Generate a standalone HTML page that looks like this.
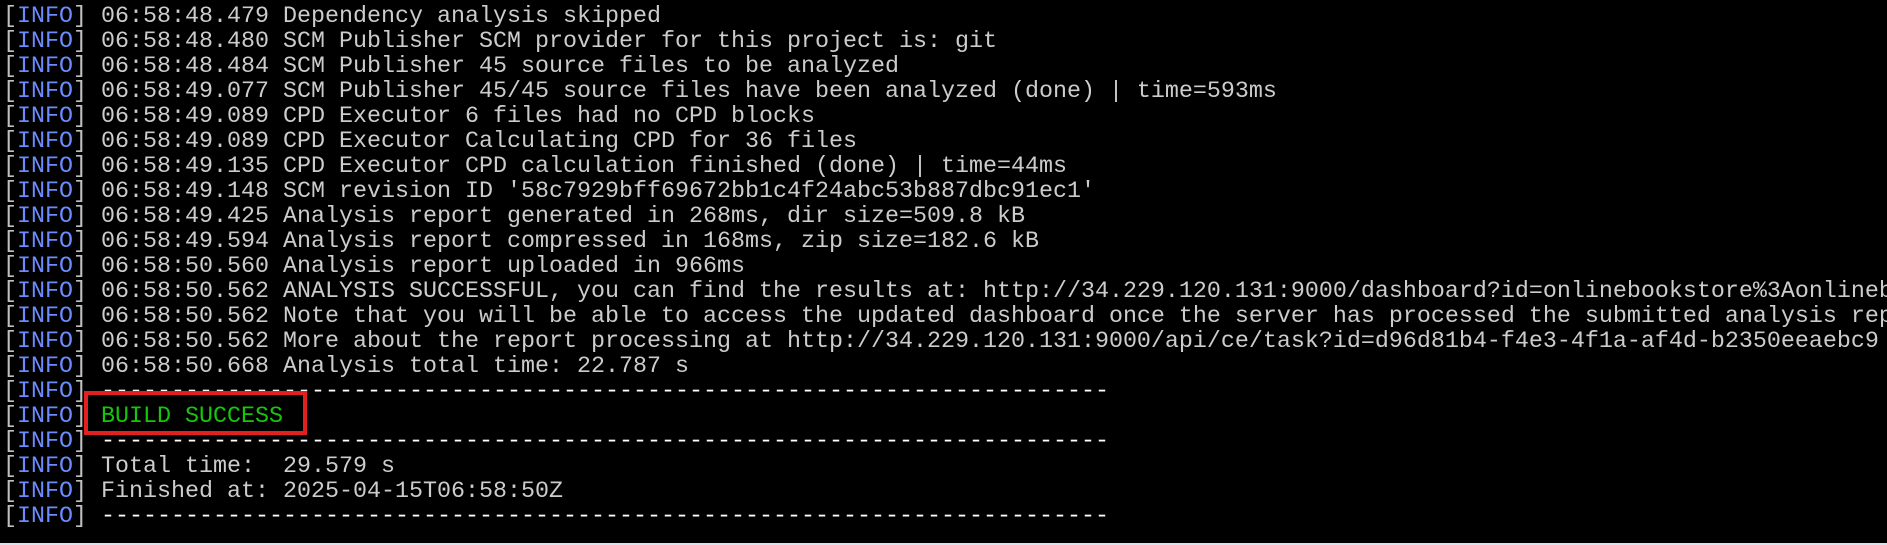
<!DOCTYPE html>
<html><head><meta charset="utf-8"><style>
html,body{margin:0;padding:0;background:#000;width:1887px;height:545px;overflow:hidden;position:relative}
.t{position:absolute;left:3px;top:5px;font-family:"Liberation Mono",monospace;font-size:23.33px;color:#cccccc}
.t div{height:25px;line-height:25px;white-space:pre}
.b{color:#c0c0c0}.i{color:#6b8cff}.g{color:#16c60c}
.box{position:absolute;left:84px;top:391px;width:215px;height:36px;border:4px solid #e0211f}
.bot{position:absolute;left:0;bottom:0;width:1887px;height:2px;background:#d6e4ef}
</style></head><body>
<div class="t">
<div><span class="b">[</span><span class="i">INFO</span><span class="b">]</span> 06:58:48.479 Dependency analysis skipped</div>
<div><span class="b">[</span><span class="i">INFO</span><span class="b">]</span> 06:58:48.480 SCM Publisher SCM provider for this project is: git</div>
<div><span class="b">[</span><span class="i">INFO</span><span class="b">]</span> 06:58:48.484 SCM Publisher 45 source files to be analyzed</div>
<div><span class="b">[</span><span class="i">INFO</span><span class="b">]</span> 06:58:49.077 SCM Publisher 45/45 source files have been analyzed (done) | time=593ms</div>
<div><span class="b">[</span><span class="i">INFO</span><span class="b">]</span> 06:58:49.089 CPD Executor 6 files had no CPD blocks</div>
<div><span class="b">[</span><span class="i">INFO</span><span class="b">]</span> 06:58:49.089 CPD Executor Calculating CPD for 36 files</div>
<div><span class="b">[</span><span class="i">INFO</span><span class="b">]</span> 06:58:49.135 CPD Executor CPD calculation finished (done) | time=44ms</div>
<div><span class="b">[</span><span class="i">INFO</span><span class="b">]</span> 06:58:49.148 SCM revision ID '58c7929bff69672bb1c4f24abc53b887dbc91ec1'</div>
<div><span class="b">[</span><span class="i">INFO</span><span class="b">]</span> 06:58:49.425 Analysis report generated in 268ms, dir size=509.8 kB</div>
<div><span class="b">[</span><span class="i">INFO</span><span class="b">]</span> 06:58:49.594 Analysis report compressed in 168ms, zip size=182.6 kB</div>
<div><span class="b">[</span><span class="i">INFO</span><span class="b">]</span> 06:58:50.560 Analysis report uploaded in 966ms</div>
<div><span class="b">[</span><span class="i">INFO</span><span class="b">]</span> 06:58:50.562 ANALYSIS SUCCESSFUL, you can find the results at: http://34.229.120.131:9000/dashboard?id=onlinebookstore%3Aonlineb</div>
<div><span class="b">[</span><span class="i">INFO</span><span class="b">]</span> 06:58:50.562 Note that you will be able to access the updated dashboard once the server has processed the submitted analysis rep</div>
<div><span class="b">[</span><span class="i">INFO</span><span class="b">]</span> 06:58:50.562 More about the report processing at http://34.229.120.131:9000/api/ce/task?id=d96d81b4-f4e3-4f1a-af4d-b2350eeaebc9</div>
<div><span class="b">[</span><span class="i">INFO</span><span class="b">]</span> 06:58:50.668 Analysis total time: 22.787 s</div>
<div><span class="b">[</span><span class="i">INFO</span><span class="b">]</span> <span style="color:#fff">------------------------------------------------------------------------</span></div>
<div><span class="b">[</span><span class="i">INFO</span><span class="b">]</span> <span class="g">BUILD SUCCESS</span></div>
<div><span class="b">[</span><span class="i">INFO</span><span class="b">]</span> <span style="color:#fff">------------------------------------------------------------------------</span></div>
<div><span class="b">[</span><span class="i">INFO</span><span class="b">]</span> Total time:  29.579 s</div>
<div><span class="b">[</span><span class="i">INFO</span><span class="b">]</span> Finished at: 2025-04-15T06:58:50Z</div>
<div><span class="b">[</span><span class="i">INFO</span><span class="b">]</span> <span style="color:#fff">------------------------------------------------------------------------</span></div>
</div>
<div class="box"></div>
<div class="bot"></div>
</body></html>
